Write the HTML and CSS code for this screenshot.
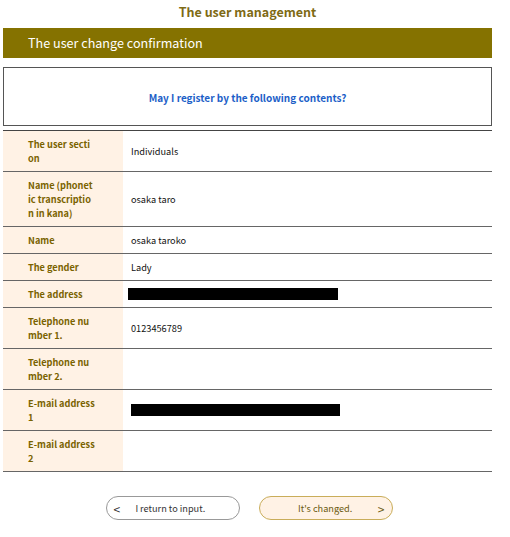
FILE: index.html
```html
<!DOCTYPE html>
<html>
<head>
<meta charset="utf-8">
<link rel="stylesheet" href="styles.css">
</head>
<body>
<div class="page">
  <h1 class="title">The user management</h1>
  <h2 class="bar">The user change confirmation</h2>
  <div class="msg">May I register by the following contents?</div>
  <table class="info">
    <tr><th>The user section</th><td>Individuals</td></tr>
    <tr><th>Name (phonetic transcription in kana)</th><td>osaka taro</td></tr>
    <tr><th>Name</th><td>osaka taroko</td></tr>
    <tr><th>The gender</th><td>Lady</td></tr>
    <tr><th>The address</th><td><span class="redact r1"></span></td></tr>
    <tr><th>Telephone number 1.</th><td>0123456789</td></tr>
    <tr><th>Telephone number 2.</th><td></td></tr>
    <tr><th>E-mail address 1</th><td><span class="redact r2"></span></td></tr>
    <tr><th>E-mail address 2</th><td></td></tr>
  </table>
  <div class="actions">
    <button class="btn back"><span class="arr">&lt;</span><span class="lbl">I return to input.</span></button>
    <button class="btn next"><span class="lbl">It's changed.</span><span class="arr">&gt;</span></button>
  </div>
</div>
</body>
</html>
```
FILE: styles.css
```css
* { box-sizing: border-box; }
body {
  margin: 0;
  background: #fff;
  font-family: "Noto Sans CJK JP", "Noto Sans", sans-serif;
}
.page {
  width: 489px;
  margin-left: 3px;
}
.title {
  margin: 0;
  height: 28px;
  padding-top: 2px;
  text-align: center;
  font-size: 12.5px;
  line-height: 20px;
  font-weight: bold;
  color: #7e6a14;
}
.bar {
  margin: 0;
  height: 30px;
  background: #857200;
  color: #fff;
  font-size: 12.6px;
  font-weight: normal;
  line-height: 30px;
  padding-left: 25px;
}
.msg {
  margin-top: 9px;
  height: 59px;
  border: 1px solid #555;
  display: flex;
  align-items: center;
  justify-content: center;
  color: #1d5fc8;
  font-size: 10px;
  font-weight: bold;
  padding-top: 2px;
}
.info {
  margin-top: 4px;
  width: 100%;
  border-collapse: collapse;
  border-top: 1px solid #444;
}
.info th, .info td {
  border-bottom: 1px solid #666;
  font-size: 9.2px;
  line-height: 14px;
  padding: 6px 0 6px 0;
  vertical-align: middle;
  text-align: left;
}
.info th {
  width: 120px;
  background: #fff2e5;
  color: #7a6300;
  font-weight: bold;
  padding-left: 25px;
  padding-right: 28px;
  word-break: break-all;
}
.info td {
  color: #111;
  padding-left: 8px;
  font-weight: normal;
}
.redact {
  display: block;
  height: 12px;
  background: #000;
}
.r1 { width: 210px; margin-left: -3px; }
.r2 { width: 209px; }
.actions {
  display: flex;
  justify-content: center;
  gap: 19px;
  margin-top: 24px;
  padding-left: 3px;
}
.btn {
  width: 134px;
  height: 24px;
  border-radius: 12px;
  font-family: inherit;
  font-size: 9.2px;
  display: flex;
  align-items: center;
  padding: 0 10px;
}
.btn .lbl { flex: 1; text-align: center; }
.btn .arr { font-size: 12px; }
.back {
  background: #fff;
  border: 1px solid #999;
  color: #333;
  padding-left: 7px;
}
.back .lbl { padding-right: 8px; }
.next {
  background: #fff2e5;
  border: 1px solid #c9ad5a;
  color: #6a5a10;
  padding-right: 7px;
}
.next .lbl { padding-left: 3px; }
```
